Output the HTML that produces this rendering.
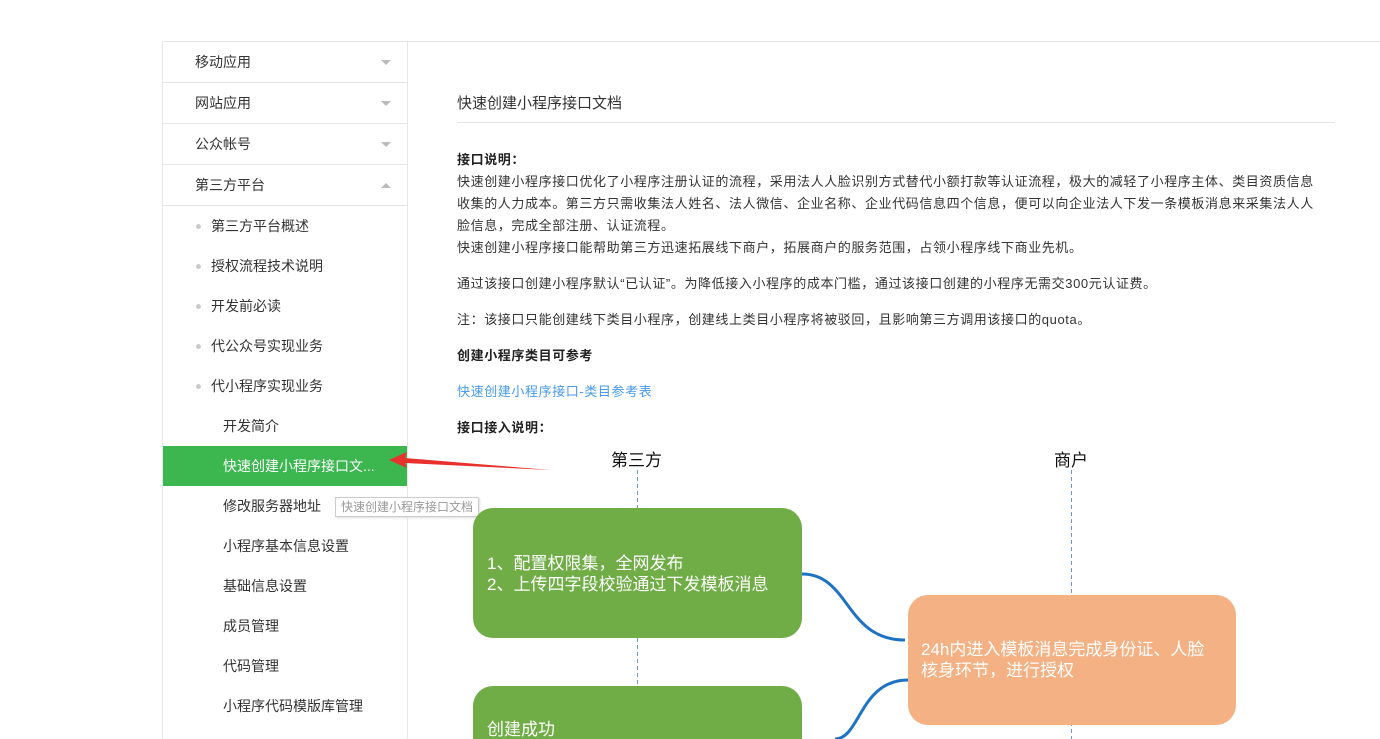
<!DOCTYPE html>
<html><head><meta charset="utf-8"><style>
html,body{margin:0;width:1380px;height:739px;overflow:hidden}
body{background:#fff;font-family:"Liberation Sans","Noto Sans CJK SC",sans-serif;color:#333;position:relative}
.top{position:absolute;left:162px;top:41px;width:1218px;border-top:1px solid #e7e7e7}
.side{position:absolute;left:162px;top:42px;width:244px;height:700px;border-left:1px solid #e7e7e7;border-right:1px solid #e7e7e7}
.grp{height:40px;border-bottom:1px solid #e7e7e7;font-size:14px;line-height:40px;padding-left:32px;position:relative}
.grp:after{content:"";position:absolute;right:16px;top:18px;border:5px solid transparent;border-top:5px solid #bbb}
.grp.up:after{top:13px;border-top-color:transparent;border-bottom:5px solid #bbb}
.it{height:40px;line-height:40px;font-size:14px;padding-left:48px;position:relative}
.it:before{content:"";position:absolute;left:33px;top:18px;width:5px;height:5px;border-radius:50%;background:#ccc}
.sub{height:40px;line-height:40px;font-size:14px;padding-left:60px}
.act{background:#3cb750;color:#fff}
.main{position:absolute;left:457px;top:0;width:878px;font-size:13px}
.t{position:absolute;top:92px;font-size:15px;color:#333}
.hr{position:absolute;top:122px;left:0;width:878px;border-top:1px solid #e5e5e5}
.p{position:absolute;left:0;width:865px;line-height:22px;letter-spacing:0.6px}
b{font-weight:bold;color:#222}
.box{position:absolute;border-radius:20px;color:#fff;font-size:17px;line-height:21px}
</style></head><body>
<div class="top"></div>
<div class="side">
<div class="grp">移动应用</div><div class="grp">网站应用</div><div class="grp">公众帐号</div><div class="grp up">第三方平台</div>
<div class="it">第三方平台概述</div><div class="it">授权流程技术说明</div><div class="it">开发前必读</div><div class="it">代公众号实现业务</div><div class="it">代小程序实现业务</div>
<div class="sub">开发简介</div><div class="sub act">快速创建小程序接口文...</div><div class="sub">修改服务器地址</div><div class="sub">小程序基本信息设置</div><div class="sub">基础信息设置</div><div class="sub">成员管理</div><div class="sub">代码管理</div><div class="sub">小程序代码模版库管理</div>
</div>
<div style="position:absolute;left:335px;top:497px;border:1px solid #ccc;background:#fff;font-size:12px;color:#999;padding:0 5px;line-height:18px;box-shadow:1px 1px 2px #ddd">快速创建小程序接口文档</div>
<svg style="position:absolute;left:385px;top:448px" width="170" height="30"><polygon points="4,12 22,4 20,10 165,22 20,15 22,20" fill="#e8302c"/></svg>
<div class="main">
<div class="t">快速创建小程序接口文档</div><div class="hr"></div>
<div class="p" style="top:149px"><b>接口说明：</b><br>快速创建小程序接口优化了小程序注册认证的流程，采用法人人脸识别方式替代小额打款等认证流程，极大的减轻了小程序主体、类目资质信息收集的人力成本。第三方只需收集法人姓名、法人微信、企业名称、企业代码信息四个信息，便可以向企业法人下发一条模板消息来采集法人人脸信息，完成全部注册、认证流程。<br>快速创建小程序接口能帮助第三方迅速拓展线下商户，拓展商户的服务范围，占领小程序线下商业先机。</div>
<div class="p" style="top:273px">通过该接口创建小程序默认“已认证”。为降低接入小程序的成本门槛，通过该接口创建的小程序无需交300元认证费。</div>
<div class="p" style="top:309px">注：该接口只能创建线下类目小程序，创建线上类目小程序将被驳回，且影响第三方调用该接口的quota。</div>
<div class="p" style="top:345px"><b>创建小程序类目可参考</b></div>
<div class="p" style="top:381px;color:#459ae9">快速创建小程序接口-类目参考表</div>
<div class="p" style="top:417px"><b>接口接入说明：</b></div>
</div>
<div style="position:absolute;left:611px;top:446px;font-size:17px;color:#111">第三方</div>
<div style="position:absolute;left:1054px;top:446px;font-size:17px;color:#111">商户</div>
<svg style="position:absolute;left:0;top:0" width="1380" height="739">
<line x1="637.5" y1="470" x2="637.5" y2="739" stroke="#6a9ad6" stroke-dasharray="4,3"/>
<line x1="1071.5" y1="470" x2="1071.5" y2="739" stroke="#6a9ad6" stroke-dasharray="4,3"/>
<path d="M802,574 C850,574 845,640 905,640" fill="none" stroke="#1f73c4" stroke-width="3"/>
<path d="M908,680 C860,680 860,739 835,739" fill="none" stroke="#1f73c4" stroke-width="3"/>
</svg>
<div class="box" style="left:473px;top:508px;width:329px;height:130px;background:#70ad47"><div style="padding:45px 0 0 14px">1、配置权限集，全网发布<br>2、上传四字段校验通过下发模板消息</div></div>
<div class="box" style="left:908px;top:595px;width:328px;height:130px;background:#f4b183"><div style="padding:44px 20px 0 13px">24h内进入模板消息完成身份证、人脸核身环节，进行授权</div></div>
<div class="box" style="left:473px;top:686px;width:329px;height:80px;background:#70ad47"><div style="padding:33px 0 0 14px">创建成功</div></div>
</body></html>
